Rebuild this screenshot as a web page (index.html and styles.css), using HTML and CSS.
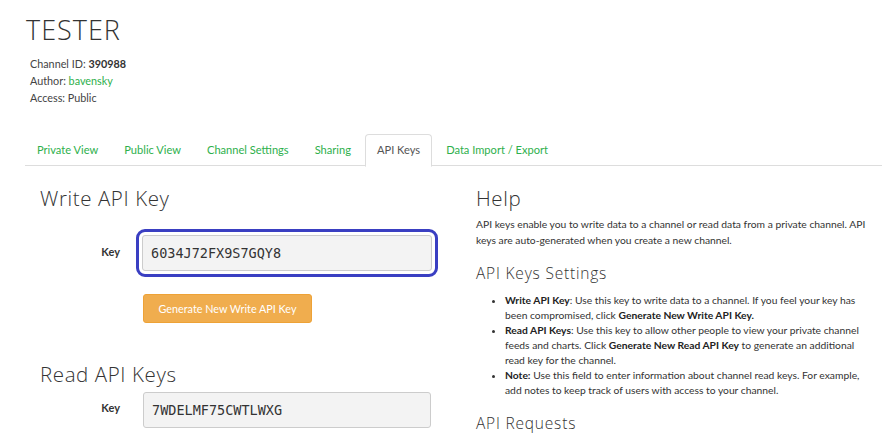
FILE: index.html
```html
<!DOCTYPE html>
<html>
<head>
<meta charset="utf-8">
<link rel="stylesheet" href="styles.css">
</head>
<body>
<div class="page">
  <h1 class="title">TESTER</h1>
  <div class="meta">
    <div>Channel ID: <b>390988</b></div>
    <div>Author: <a class="link">bavensky</a></div>
    <div>Access: Public</div>
  </div>
  <ul class="tabs">
    <li class="tab"><a>Private View</a></li>
    <li class="tab"><a>Public View</a></li>
    <li class="tab"><a>Channel Settings</a></li>
    <li class="tab"><a>Sharing</a></li>
    <li class="tab active"><a>API Keys</a></li>
    <li class="tab"><a>Data Import / Export</a></li>
  </ul>
  <div class="row">
    <div class="col-left">
      <h3 class="h3 write-title">Write API Key</h3>
      <div class="form-row">
        <label class="label">Key</label>
        <div class="ring"><div class="input">6034J72FX9S7GQY8</div></div>
      </div>
      <div class="btn-row">
        <button class="btn">Generate New Write API Key</button>
      </div>
      <h3 class="h3 read-title">Read API Keys</h3>
      <div class="form-row plain">
        <label class="label">Key</label>
        <div class="input">7WDELMF75CWTLWXG</div>
      </div>
    </div>
    <div class="col-right">
      <h3 class="h3 help-title">Help</h3>
      <p class="para">API keys enable you to write data to a channel or read data from a private channel. API keys are auto-generated when you create a new channel.</p>
      <h4 class="h4">API Keys Settings</h4>
      <ul class="list">
        <li><b>Write API Key</b>: Use this key to write data to a channel. If you feel your key has been compromised, click <b>Generate New Write API Key.</b></li>
        <li><b>Read API Keys</b>: Use this key to allow other people to view your private channel feeds and charts. Click <b>Generate New Read API Key</b> to generate an additional read key for the channel.</li>
        <li><b>Note:</b> Use this field to enter information about channel read keys. For example, add notes to keep track of users with access to your channel.</li>
      </ul>
      <h4 class="h4 req">API Requests</h4>
    </div>
  </div>
</div>
</body>
</html>
```
FILE: styles.css
```css
* { box-sizing: border-box; }
html, body { margin: 0; padding: 0; background: #fff; }
body {
  font-family: Lato, "Liberation Sans", sans-serif;
  font-size: 12px;
  color: #333;
  overflow: hidden;
  height: 440px;
}
.page { padding: 0 2px 0 25px; }
.title {
  margin: 0;
  padding: 12px 0 0 1px;
  font-family: "Open Sans", sans-serif;
  font-weight: 300;
  font-size: 27px;
  line-height: 36px;
  color: #333;
  letter-spacing: 1px;
}
.meta {
  padding: 7px 0 0 5px;
  line-height: 17px;
  font-size: 10.8px;
  color: #444;
}
.meta b { font-weight: 700; color: #333; }
.link { color: #2eb04c; }
.tabs {
  list-style: none;
  margin: 28px 0 0 0;
  padding: 0;
  display: flex;
  border-bottom: 1px solid #ddd;
  height: 32px;
}
.tab {
  margin-right: 2px;
  margin-bottom: -1px;
  padding: 0 11px 2px;
  height: 33px;
  border: 1px solid transparent;
  border-radius: 4px 4px 0 0;
  display: flex;
  align-items: center;
  font-size: 11.1px;
}
.tab a { color: #2eb04c; }
.tab.active {
  border-color: #ddd;
  border-bottom-color: #fff;
  background: #fff;
}
.tab.active a { color: #555; }
.row { display: flex; }
.col-left { width: 436px; padding: 0 15px; }
.col-right { width: 420px; padding: 0 15px; }
.h3 {
  margin: 0;
  font-family: "Open Sans", sans-serif;
  font-weight: 300;
  font-size: 20.5px;
  line-height: 28px;
  color: #333;
  letter-spacing: 0.6px;
}
.write-title { margin-top: 18px; }
.help-title { margin-top: 18px; }
.read-title { margin-top: 37px; }
.form-row {
  display: grid;
  grid-template-columns: 80px 288px;
  column-gap: 23px;
  align-items: start;
  margin-top: 24px;
}
.form-row.plain { margin-top: 4px; }
.label {
  text-align: right;
  font-weight: 700;
  font-size: 11px;
  padding-top: 9px;
}
.ring {
  margin: -7px -7px;
  border: 3px solid #3a3fc2;
  border-radius: 9px;
  padding: 3px;
  width: 302px;
}
.input {
  height: 36px;
  background: #f3f3f3;
  border: 1px solid #ccc;
  border-radius: 3px;
  padding: 0 8px;
  display: flex;
  align-items: center;
  font-family: "DejaVu Sans Mono", monospace;
  font-size: 13.5px;
  color: #333;
}
.btn-row { padding-left: 103px; margin-top: 24px; }
.btn {
  width: 169px;
  height: 29px;
  background: #f0ad4e;
  border: 1px solid #eea236;
  border-radius: 3px;
  color: #fff;
  font-family: Lato, sans-serif;
  font-size: 10.8px;
  padding: 0;
}
.para {
  margin: 4px 0 0 0;
  font-size: 10.3px;
  line-height: 16px;
  color: #333;
}
.h4 {
  margin: 15px 0 0 0;
  font-family: "Open Sans", sans-serif;
  font-weight: 300;
  font-size: 15.5px;
  line-height: 20px;
  color: #333;
  letter-spacing: 0.8px;
}
.list {
  margin: 10px 0 0 0;
  padding-left: 29px;
  font-size: 10.3px;
  line-height: 15px;
  color: #333;
}
.list b { color: #222; }
.req { margin-top: 15px; }
```
